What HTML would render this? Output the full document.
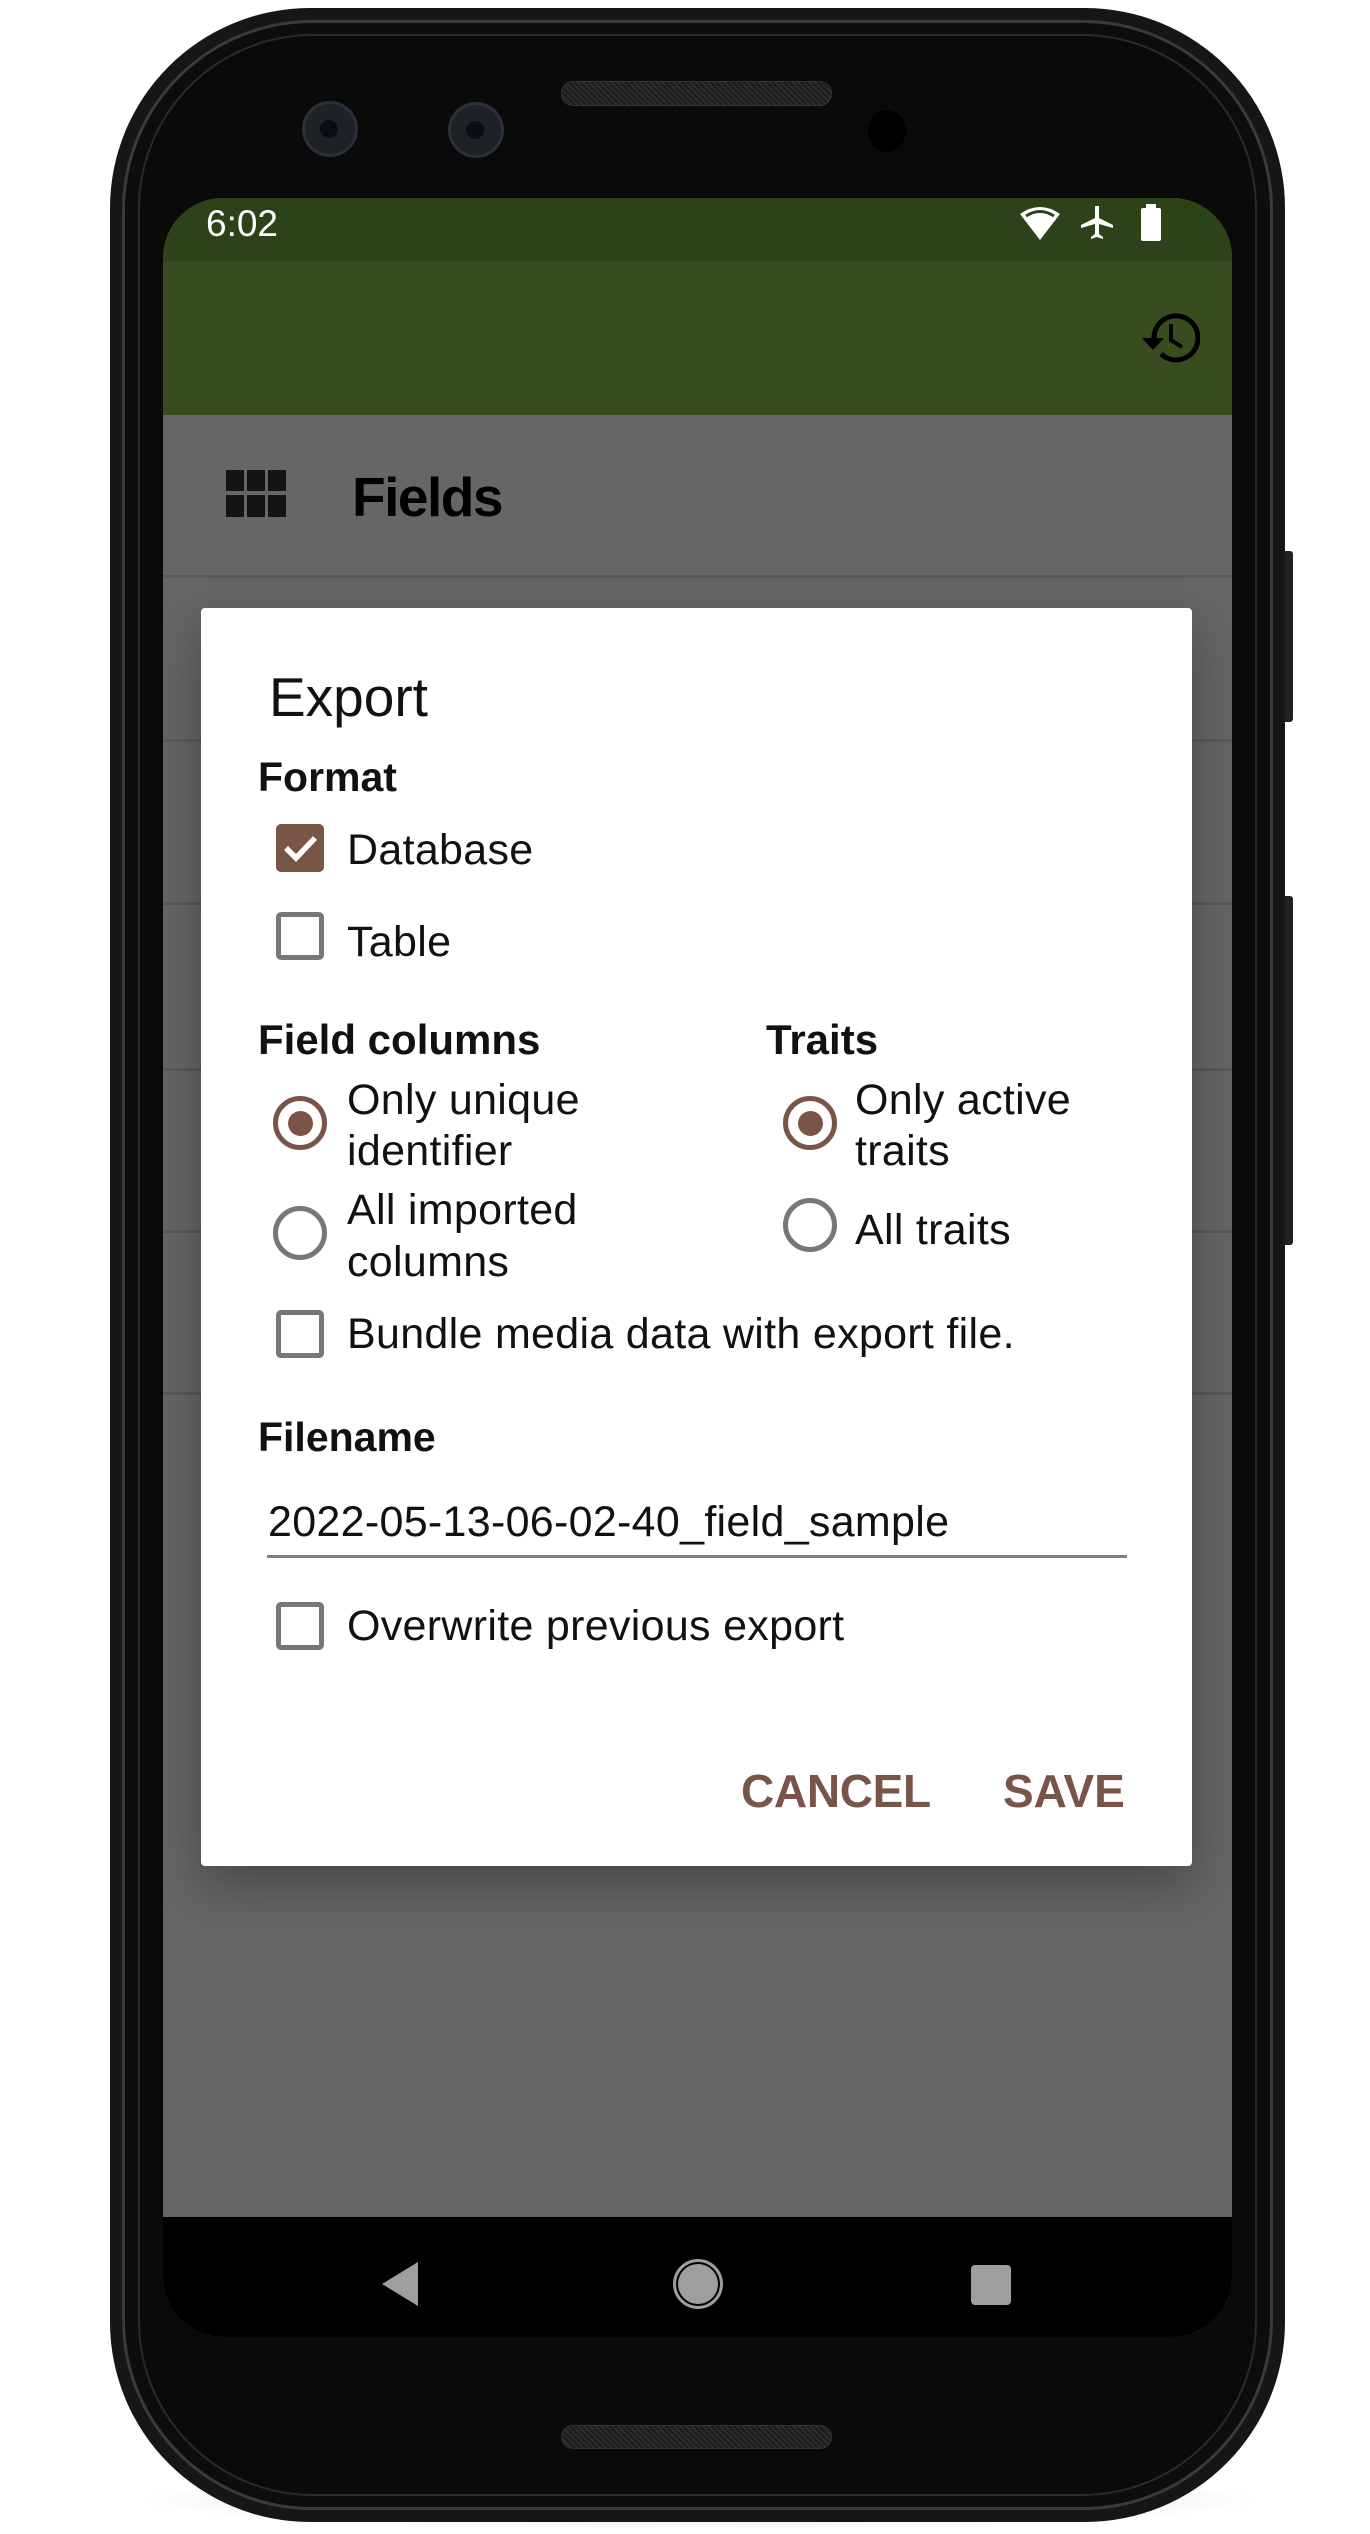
<!DOCTYPE html>
<html><head><meta charset="utf-8"><style>
*{margin:0;padding:0;box-sizing:border-box}
body{width:1370px;height:2534px;background:#fff;position:relative;overflow:hidden;font-family:"Liberation Sans",sans-serif}
.a{position:absolute}
.t{position:absolute;line-height:1;white-space:nowrap;color:#111}
.b{font-size:43px;letter-spacing:0.3px}
.h{font-size:41px;font-weight:bold}
.cb{position:absolute;left:276px;width:48px;height:48px;border:5px solid #777;border-radius:5px}
.rd{position:absolute;width:54px;height:54px;border:5px solid #777;border-radius:50%}
.rd.on{border-color:#795548}
.rd.on::after{content:"";position:absolute;left:9.5px;top:9.5px;width:25px;height:25px;border-radius:50%;background:#795548}
.line{position:absolute;left:163px;width:1069px;height:3px;background:#5a5a5a}
</style></head><body>
<div class="a" style="left:130px;top:2470px;width:1140px;height:60px;border-radius:50%;background:radial-gradient(ellipse at center,rgba(0,0,0,0.18),rgba(0,0,0,0) 70%)"></div>
<div class="a" style="left:1280px;top:551px;width:13px;height:171px;background:#222;border-radius:3px"></div>
<div class="a" style="left:1280px;top:896px;width:13px;height:349px;background:#222;border-radius:3px"></div>
<div class="a" style="left:110px;top:8px;width:1175px;height:2514px;border-radius:200px;background:#161616"></div>
<div class="a" style="left:122px;top:20px;width:1151px;height:2490px;border-radius:190px;background:#0d0d0d;border:3px solid #3a3a3a"></div>
<div class="a" style="left:138px;top:34px;width:1119px;height:2462px;border-radius:175px;background:#0a0a0a;border:2px solid #2a2a2a"></div>
<div class="a" style="left:561px;top:81px;width:271px;height:25px;border-radius:12px;background:repeating-linear-gradient(45deg,#1c1c1c 0 2px,#2c2c2c 2px 4px);border:1px solid #333"></div>
<div class="a" style="left:561px;top:2425px;width:271px;height:24px;border-radius:12px;background:repeating-linear-gradient(45deg,#1c1c1c 0 2px,#2c2c2c 2px 4px);border:1px solid #333"></div>
<div class="a" style="left:302px;top:101px;width:56px;height:56px;border-radius:50%;background:#1e2226;border:3px solid #2a3038"></div>
<div class="a" style="left:320px;top:120px;width:18px;height:18px;border-radius:50%;background:#0b0d10"></div>
<div class="a" style="left:448px;top:102px;width:56px;height:56px;border-radius:50%;background:#1e2226;border:3px solid #2a3038"></div>
<div class="a" style="left:466px;top:121px;width:18px;height:18px;border-radius:50%;background:#0b0d10"></div>
<div class="a" style="left:868px;top:110px;width:38px;height:42px;border-radius:50%;background:#000"></div>
<div class="a" style="left:163px;top:198px;width:1069px;height:2139px;border-radius:60px;overflow:hidden;background:#666">
  <div class="a" style="left:0;top:0;width:1069px;height:63px;background:#2c4219"></div>
  <div class="a" style="left:0;top:63px;width:1069px;height:154px;background:#384d1f"></div>
  <div class="a" style="left:0;top:2019px;width:1069px;height:120px;background:#000"></div>
</div>
<div class="t" style="left:206px;top:205px;font-size:37px;color:#fff">6:02</div>
<svg class="a" style="left:1018px;top:204px" width="44" height="38" viewBox="0 0 44 38"><path d="M2 10 Q22 -4 42 10 L22 36 Z" fill="#fff"/><path d="M8 12 Q22 3 36 12" stroke="#2c4219" stroke-width="3" fill="none"/></svg>
<svg class="a" style="left:1080px;top:204px" width="34" height="38" viewBox="0 0 34 38"><path d="M15 2 h4 v12 l14 7 v3 l-14 -4 v10 l4 3 v2 l-6 -2 l-6 2 v-2 l4 -3 v-10 l-14 4 v-3 l14 -7 z" fill="#fff"/></svg>
<div class="a" style="left:1141px;top:208px;width:20px;height:33px;background:#fff;border-radius:2px"></div>
<div class="a" style="left:1146px;top:204px;width:10px;height:5px;background:#fff"></div>
<svg class="a" style="left:1140px;top:311px" width="60" height="54" viewBox="0 0 60 54"><path d="M14 27 A22 22 0 1 1 21 43" stroke="#000" stroke-width="5" fill="none"/><path d="M2 27 L24 27 L13 39 Z" fill="#000"/><path d="M31 13 V29 L42 36" stroke="#000" stroke-width="4" fill="none"/></svg>
<svg class="a" style="left:226px;top:470px" width="60" height="47" viewBox="0 0 60 47"><g fill="#141414"><rect x="0" y="0" width="18" height="21"/><rect x="21" y="0" width="18" height="21"/><rect x="42" y="0" width="18" height="21"/><rect x="0" y="25" width="18" height="22"/><rect x="21" y="25" width="18" height="22"/><rect x="42" y="25" width="18" height="22"/></g></svg>
<div class="t" style="left:352px;top:470px;font-size:55px;font-weight:bold;color:#000;letter-spacing:-1.5px">Fields</div>
<div class="line" style="top:575px"></div>
<div class="line" style="top:739px"></div>
<div class="line" style="top:902px"></div>
<div class="line" style="top:1068px"></div>
<div class="line" style="top:1230px"></div>
<div class="line" style="top:1392px"></div>
<div class="a" style="left:201px;top:608px;width:991px;height:1258px;background:#fff;border-radius:4px;box-shadow:0 20px 50px rgba(0,0,0,0.3)"></div>
<div class="t" style="left:269px;top:670px;font-size:55px">Export</div>
<div class="t h" style="left:258px;top:757px">Format</div>
<div class="cb" style="top:824px;background:#795548;border-color:#795548"></div>
<svg class="a" style="left:276px;top:824px" width="48" height="48" viewBox="0 0 48 48"><path d="M10 24 L20 34 L39 14" stroke="#fff" stroke-width="5.5" fill="none"/></svg>
<div class="t b" style="left:347px;top:829px">Database</div>
<div class="cb" style="top:912px"></div>
<div class="t b" style="left:347px;top:921px">Table</div>
<div class="t h" style="left:258px;top:1019px;font-size:42px">Field columns</div>
<div class="t h" style="left:766px;top:1019px;font-size:42px">Traits</div>
<div class="rd on" style="left:273px;top:1096px"></div>
<div class="t b" style="left:347px;top:1079px">Only unique</div>
<div class="t b" style="left:347px;top:1130px">identifier</div>
<div class="rd" style="left:273px;top:1206px"></div>
<div class="t b" style="left:347px;top:1189px">All imported</div>
<div class="t b" style="left:347px;top:1241px">columns</div>
<div class="rd on" style="left:783px;top:1096px"></div>
<div class="t b" style="left:855px;top:1079px">Only active</div>
<div class="t b" style="left:855px;top:1130px">traits</div>
<div class="rd" style="left:783px;top:1198px"></div>
<div class="t b" style="left:855px;top:1209px">All traits</div>
<div class="cb" style="top:1310px"></div>
<div class="t b" style="left:347px;top:1313px">Bundle media data with export file.</div>
<div class="t h" style="left:258px;top:1417px">Filename</div>
<div class="t b" style="left:268px;top:1501px">2022-05-13-06-02-40_field_sample</div>
<div class="a" style="left:267px;top:1555px;width:860px;height:3px;background:#808080"></div>
<div class="cb" style="top:1602px"></div>
<div class="t b" style="left:347px;top:1605px">Overwrite previous export</div>
<div class="t" style="left:741px;top:1768px;font-size:46px;font-weight:bold;color:#795548;letter-spacing:-0.3px">CANCEL</div>
<div class="t" style="left:1003px;top:1768px;font-size:46px;font-weight:bold;color:#795548;letter-spacing:0px">SAVE</div>
<svg class="a" style="left:378px;top:2260px" width="44" height="48" viewBox="0 0 44 48"><path d="M40 2 L40 46 L4 24 Z" fill="#9e9e9e"/></svg>
<div class="a" style="left:673px;top:2259px;width:50px;height:50px;border-radius:50%;border:3px solid #9e9e9e;background:#000"></div>
<div class="a" style="left:678px;top:2264px;width:40px;height:40px;border-radius:50%;background:#9e9e9e"></div>
<div class="a" style="left:971px;top:2265px;width:40px;height:40px;border-radius:4px;background:#9e9e9e"></div>
</body></html>
